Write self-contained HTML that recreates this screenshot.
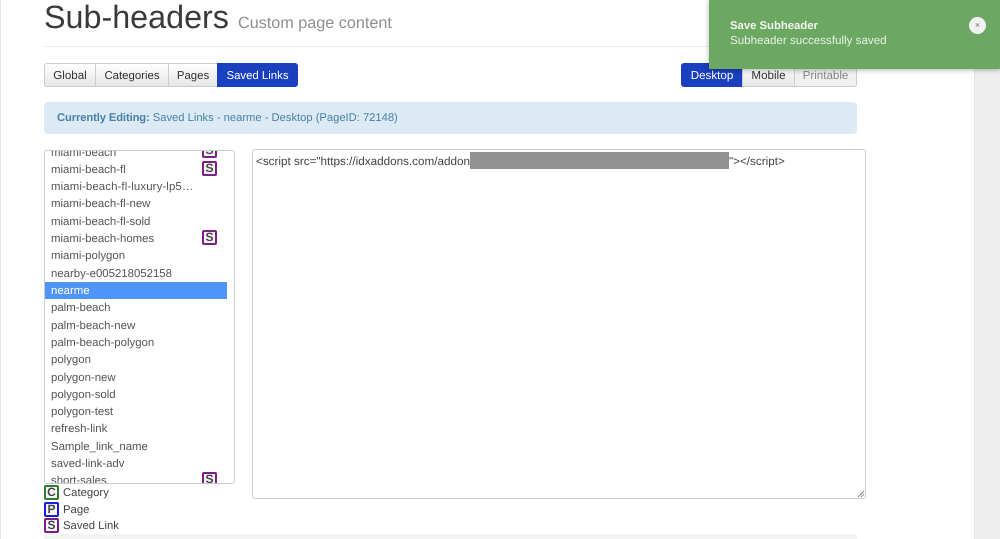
<!DOCTYPE html>
<html><head><meta charset="utf-8">
<style>
html,body{margin:0;padding:0;width:1000px;height:539px;overflow:hidden;background:#fff;font-family:"Liberation Sans",sans-serif;color:#333;text-rendering:geometricPrecision}
.a{position:absolute;white-space:nowrap}
.btn{position:absolute;top:63px;height:24px;line-height:24px;text-align:center;font-size:11.4px;box-sizing:border-box;border:1px solid #ccc;background:linear-gradient(#fff,#e6e6e6);color:#333}
.on{background:#1a3fbf;border-color:#1a3fbf;color:#fff}
.it{position:absolute;left:51px;font-size:11.4px;color:#555;height:17px;line-height:17px;white-space:nowrap}
.b{position:absolute;box-sizing:border-box;width:15px;height:15px;border:2px solid #7b1f86;border-radius:2px;font-size:12px;font-weight:bold;line-height:11px;text-align:center;color:#444;background:#f6f6f6}
</style></head>
<body>
<div class="a" style="left:0;top:0;width:1px;height:539px;background:#e6e6e6"></div>
<div class="a" style="left:974px;top:0;width:26px;height:539px;background:#eeeeee;border-left:1px solid #e6e6e6;box-sizing:border-box"></div>

<div class="a" style="left:44px;top:-3px;font-size:32.3px;line-height:40px;color:#3a3a3a">Sub-headers</div>
<div class="a" style="left:238px;top:13px;font-size:16.2px;line-height:20px;color:#8f8f8f">Custom page content</div>
<div class="a" style="left:44px;top:46px;width:813px;height:1px;background:#eee"></div>

<div class="btn" style="left:44px;width:52px;border-radius:3px 0 0 3px;font-size:11.6px">Global</div>
<div class="btn" style="left:95px;width:74px">Categories</div>
<div class="btn" style="left:168px;width:50px">Pages</div>
<div class="btn on" style="left:217px;width:81px;border-radius:0 3px 3px 0">Saved Links</div>

<div class="btn on" style="left:681px;width:62px;border-radius:3px 0 0 3px;font-size:11.6px">Desktop</div>
<div class="btn" style="left:742px;width:53px;font-size:11.6px">Mobile</div>
<div class="btn" style="left:794px;width:63px;border-radius:0 3px 3px 0;color:#888;background:#f0f0f0;font-size:11.6px">Printable</div>

<div class="a" style="left:44px;top:102px;width:813px;height:32px;background:#dbeaf5;border-radius:4px"></div>
<div class="a" style="left:57px;top:110px;font-size:11.2px;line-height:16px;color:#4a7fa6"><b style="letter-spacing:-.1px">Currently Editing:</b> Saved Links - nearme - Desktop (PageID: 72148)</div>

<!-- list -->
<div class="a" style="left:44px;top:150px;width:191px;height:334px;box-sizing:border-box;border:1px solid #ccc;border-radius:3px;overflow:hidden;background:#fff"></div>
<div class="a" style="left:45px;top:151px;width:189px;height:332px;overflow:hidden">
  <div style="position:absolute;left:-45px;top:-151px;width:234px;height:483px">
    <div class="it" style="top:144.500px">miami-beach</div><div class="b" style="left:202px;top:143px">S</div>
    <div class="it" style="top:162px">miami-beach-fl</div><div class="b" style="left:202px;top:161px">S</div>
    <div class="it" style="top:179px;letter-spacing:.12px">miami-beach-fl-luxury-lp5…</div>
    <div class="it" style="top:196px">miami-beach-fl-new</div>
    <div class="it" style="top:214px">miami-beach-fl-sold</div>
    <div class="it" style="top:231px">miami-beach-homes</div><div class="b" style="left:202px;top:230px">S</div>
    <div class="it" style="top:248px">miami-polygon</div>
    <div class="it" style="top:266px">nearby-e005218052158</div>
    <div style="position:absolute;left:45px;top:282px;width:182px;height:17px;background:#4f94f7"></div>
    <div class="it" style="top:283px;color:#fff">nearme</div>
    <div class="it" style="top:300px">palm-beach</div>
    <div class="it" style="top:318px">palm-beach-new</div>
    <div class="it" style="top:335px">palm-beach-polygon</div>
    <div class="it" style="top:352px">polygon</div>
    <div class="it" style="top:370px">polygon-new</div>
    <div class="it" style="top:387px">polygon-sold</div>
    <div class="it" style="top:404px">polygon-test</div>
    <div class="it" style="top:421px">refresh-link</div>
    <div class="it" style="top:439px">Sample_link_name</div>
    <div class="it" style="top:456px">saved-link-adv</div>
    <div class="it" style="top:473px">short-sales</div><div class="b" style="left:202px;top:472px">S</div>
  </div>
</div>

<!-- legend -->
<div class="b" style="left:44px;top:485px;border-color:#2e7d32">C</div>
<div class="a" style="left:63px;top:485px;font-size:11.3px;line-height:16px;color:#444">Category</div>
<div class="b" style="left:44px;top:502px;border-color:#1a1ae0">P</div>
<div class="a" style="left:63px;top:502px;font-size:11.3px;line-height:16px;color:#444">Page</div>
<div class="b" style="left:44px;top:518px">S</div>
<div class="a" style="left:63px;top:518px;font-size:11.3px;line-height:16px;color:#444">Saved Link</div>

<!-- textarea -->
<div class="a" style="left:252px;top:149px;width:614px;height:350px;box-sizing:border-box;border:1px solid #ccc;border-radius:3px;background:#fff"></div>
<div class="a" style="left:256px;top:154px;font-size:11.7px;line-height:16px;color:#444">&lt;script src="https://idxaddons.com/addon</div>
<div class="a" style="left:470px;top:152px;width:259px;height:17px;background:#929292"></div>
<div class="a" style="left:729px;top:154px;font-size:11.7px;line-height:16px;color:#444">"&gt;&lt;/script&gt;</div>
<svg class="a" style="left:857px;top:490px" width="8" height="8"><path d="M1 7L7 1M4 7L7 4" stroke="#888" stroke-width="1" fill="none"/></svg>

<!-- bottom panel -->
<div class="a" style="left:44px;top:534px;width:813px;height:5px;background:#f3f3f3;border-radius:3px 3px 0 0"></div>

<!-- toast -->
<div class="a" style="left:709px;top:0;width:291px;height:69px;background:#6ca861;box-shadow:0 1px 5px rgba(0,0,0,.3)"></div>
<div class="a" style="left:730px;top:19px;font-size:11.3px;line-height:15px;font-weight:bold;color:#f0f5ee">Save Subheader</div>
<div class="a" style="left:730px;top:33px;font-size:11.6px;line-height:15px;color:#e8f1e5">Subheader successfully saved</div>
<div class="a" style="left:969px;top:17px;width:17px;height:17px;border-radius:50%;background:#f1f1f1;color:#777;font-size:9px;line-height:17px;text-align:center">×</div>
</body></html>
